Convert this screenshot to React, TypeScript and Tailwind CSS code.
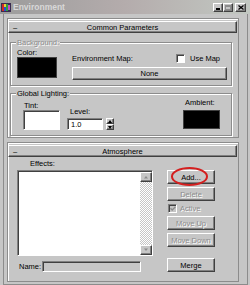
import React from 'react';

const raised =
  'border border-t-white border-l-white border-r-[#404040] border-b-[#404040] shadow-[inset_-1px_-1px_0_#808080]';
const sunken =
  'border border-t-[#808080] border-l-[#808080] border-r-white border-b-white shadow-[inset_1px_1px_0_#404040]';
const etched = 'border border-[#8c8c8c] shadow-[inset_1px_1px_0_#ffffff,1px_1px_0_#ffffff]';
const dim = 'text-[#8c8c8c] [text-shadow:1px_1px_0_#ffffff]';

function MaxIcon() {
  return (
    <svg width="10" height="11" viewBox="0 0 10 11" className="ml-[1px] shrink-0">
      <rect x="0" y="1" width="10" height="9" fill="#3a2a50" />
      <rect x="1" y="2" width="2" height="7" fill="#d02828" />
      <rect x="3" y="2" width="2" height="3" fill="#e8d030" />
      <rect x="3" y="5" width="2" height="4" fill="#2850d0" />
      <rect x="5" y="2" width="2" height="7" fill="#30a040" />
      <rect x="7" y="3" width="2" height="5" fill="#c050c0" />
    </svg>
  );
}

function TitleBar() {
  return (
    <div className="h-[14px] flex items-center bg-gradient-to-r from-[#9c9c9c] via-[#b4acac] to-[#c2c8c2] pr-[4px]">
      <MaxIcon />
      <span className="ml-[2px] text-[8.5px] leading-[10px] font-bold text-[#d8d8d8]">Environment</span>
      <div className="ml-auto flex items-center">
        <div className={`w-[10px] h-[9px] bg-[#c6c6c6] flex items-end pl-[2px] pb-[1px] ${raised}`}>
          <div className="w-[4px] h-[2px] bg-black" />
        </div>
        <div className={`w-[10px] h-[9px] bg-[#c6c6c6] flex items-center justify-center ${raised}`}>
          <div className="w-[6px] h-[5px] border border-t-2 border-[#8c8c8c]" />
        </div>
        <div className={`ml-[2px] w-[11px] h-[9px] bg-[#c6c6c6] flex items-center justify-center ${raised}`}>
          <svg width="6" height="5" viewBox="0 0 6 5">
            <path d="M0.5 0.5 L5.5 4.5 M5.5 0.5 L0.5 4.5" stroke="#000" strokeWidth="1.3" />
          </svg>
        </div>
      </div>
    </div>
  );
}

function RolloutHeader({ title }: { title: string }) {
  return (
    <div className={`mt-[2px] mr-[1px] h-[12px] bg-[#c6c6c6] grid grid-cols-[1fr_auto_1fr] items-center ${raised}`}>
      <span className="pl-[4px] leading-[9px]">–</span>
      <span className="leading-[9px]">{title}</span>
      <span />
    </div>
  );
}

function Group({
  label,
  disabled,
  className,
  children,
}: {
  label: string;
  disabled?: boolean;
  className: string;
  children: React.ReactNode;
}) {
  return (
    <div className={`ml-[2px] w-[222px] ${etched} ${className}`}>
      <div className={`-mt-[5px] ml-[5px] px-[1px] w-fit bg-[#c6c6c6] leading-[9px] ${disabled ? dim : ''}`}>
        {label}
      </div>
      {children}
    </div>
  );
}

function Checkbox({ checked, disabled }: { checked?: boolean; disabled?: boolean }) {
  return (
    <div
      className={`w-[9px] h-[9px] flex items-center justify-center ${sunken} ${
        disabled ? 'bg-[#c6c6c6]' : 'bg-white'
      }`}
    >
      {checked && (
        <svg width="6" height="5" viewBox="0 0 6 5">
          <path d="M0.5 2.2 L2.2 4 L5.5 0.7" fill="none" stroke={disabled ? '#8c8c8c' : '#000'} strokeWidth="1.3" />
        </svg>
      )}
    </div>
  );
}

function Button({ label, disabled, className = '' }: { label: string; disabled?: boolean; className?: string }) {
  return (
    <div
      className={`w-[48px] h-[14px] bg-[#c6c6c6] flex items-center justify-center leading-[9px] ${raised} ${
        disabled ? dim : ''
      } ${className}`}
    >
      {label}
    </div>
  );
}

function ScrollArrow({ up }: { up?: boolean }) {
  return (
    <div className={`h-[10px] bg-[#c6c6c6] flex items-center justify-center ${raised}`}>
      <svg width="6" height="4" viewBox="0 0 6 4">
        <path d={up ? 'M1 3.5 L5 3.5 L3 1 Z' : 'M1 0.5 L5 0.5 L3 3 Z'} fill="#8c8c8c" />
      </svg>
    </div>
  );
}

function CommonParameters() {
  return (
    <div className="h-[120px] border border-[#8c8c8c] shadow-[inset_1px_1px_0_#ffffff] flex flex-col">
      <RolloutHeader title="Common Parameters" />
      <Group label="Background:" disabled className="mt-[9px] h-[44px]">
        <div className="mt-[1px] flex">
          <div className="ml-[6px] flex flex-col">
            <span className="leading-[9px]">Color:</span>
            <div className="w-[40px] h-[21px] bg-black border border-[#404040]" />
          </div>
          <div className="ml-[15px] w-[155px] flex flex-col pt-[6px]">
            <div className="flex items-center h-[9px]">
              <span className="leading-[9px]">Environment Map:</span>
              <div className="ml-auto mr-[7px] flex items-center gap-[5px]">
                <Checkbox />
                <span className="leading-[9px]">Use Map</span>
              </div>
            </div>
            <div className={`mt-[4px] h-[13px] bg-[#c6c6c6] flex items-center justify-center leading-[9px] ${raised}`}>
              None
            </div>
          </div>
        </div>
      </Group>
      <Group label="Global Lighting:" className="mt-[7px] h-[43px]">
        <div className="flex items-start">
          <div className="ml-[12px] mt-[3px] flex flex-col">
            <span className="leading-[9px] pl-[1px]">Tint:</span>
            <div className={`w-[37px] h-[20px] bg-white ${sunken}`} />
          </div>
          <div className="ml-[7px] mt-[9px] flex flex-col">
            <span className="ml-[3px] leading-[9px]">Level:</span>
            <div className="mt-[2px] flex items-center">
              <div className={`w-[36px] h-[12px] bg-white flex items-center pl-[3px] leading-[9px] ${sunken}`}>1.0</div>
              <div className="ml-[3px] w-[8px] h-[12px] flex flex-col">
                <div className={`flex-1 bg-[#c6c6c6] flex items-center justify-center ${raised} border`}>
                  <svg width="4" height="3" viewBox="0 0 4 3">
                    <path d="M0 3 L4 3 L2 0 Z" fill="#000" />
                  </svg>
                </div>
                <div className={`flex-1 bg-[#c6c6c6] flex items-center justify-center ${raised}`}>
                  <svg width="4" height="3" viewBox="0 0 4 3">
                    <path d="M0 0 L4 0 L2 3 Z" fill="#000" />
                  </svg>
                </div>
              </div>
            </div>
          </div>
          <div className="ml-auto mr-[11px] flex flex-col">
            <span className="ml-[2px] leading-[9px]">Ambient:</span>
            <div className="mt-[3px] w-[37px] h-[19px] bg-black border border-[#404040]" />
          </div>
        </div>
      </Group>
    </div>
  );
}

function Atmosphere() {
  return (
    <div className="h-[140px] border border-[#8c8c8c] shadow-[inset_1px_1px_0_#ffffff] flex flex-col">
      <RolloutHeader title="Atmosphere" />
      <span className="mt-[2px] ml-[22px] leading-[9px]">Effects:</span>
      <div className="mt-[2px] ml-[9px] flex items-start">
        <div className="flex flex-col">
          <div className={`w-[136px] h-[86px] bg-white flex justify-end ${sunken}`}>
            <div className="mt-[1px] w-[12px] flex flex-col">
              <ScrollArrow up />
              <div className="flex-1 bg-[repeating-conic-gradient(#c6c6c6_0%_25%,#ffffff_0%_50%)] bg-[length:2px_2px]" />
              <ScrollArrow />
            </div>
          </div>
          <div className="mt-[5px] ml-[2px] flex items-center">
            <span className="leading-[9px]">Name:</span>
            <div className={`ml-[1px] w-[99px] h-[11px] bg-[#c6c6c6] ${sunken}`} />
          </div>
        </div>
        <div className="ml-[14px] flex flex-col">
          <div className="relative">
            <Button label="Add..." />
            <div className="absolute left-[4px] -top-[3px] w-[37px] h-[19px] rounded-[50%] border-2 border-[#d42020]" />
          </div>
          <Button label="Delete" disabled className="mt-[3px]" />
          <div className="mt-[3px] h-[9px] flex items-center gap-[3px] pl-[1px]">
            <Checkbox checked disabled />
            <span className={`leading-[9px] ${dim}`}>Active</span>
          </div>
          <Button label="Move Up" disabled className="mt-[3px]" />
          <Button label="Move Down" disabled className="mt-[3px]" />
          <Button label="Merge" className="mt-[11px]" />
        </div>
      </div>
    </div>
  );
}

export default function App() {
  return (
    <div className="w-[250px] h-[285px] bg-[#c6c6c6] flex flex-col overflow-hidden text-black text-[7.5px] font-['Liberation_Sans',Arial,sans-serif]">
      <TitleBar />
      <div className="flex-1 ml-[3px] mr-[2px] border-l border-r border-b border-[#8c8c8c] pl-[3px] pr-[8px] pt-[4px] pb-[2px] flex flex-col gap-[4px]">
        <CommonParameters />
        <Atmosphere />
      </div>
    </div>
  );
}
